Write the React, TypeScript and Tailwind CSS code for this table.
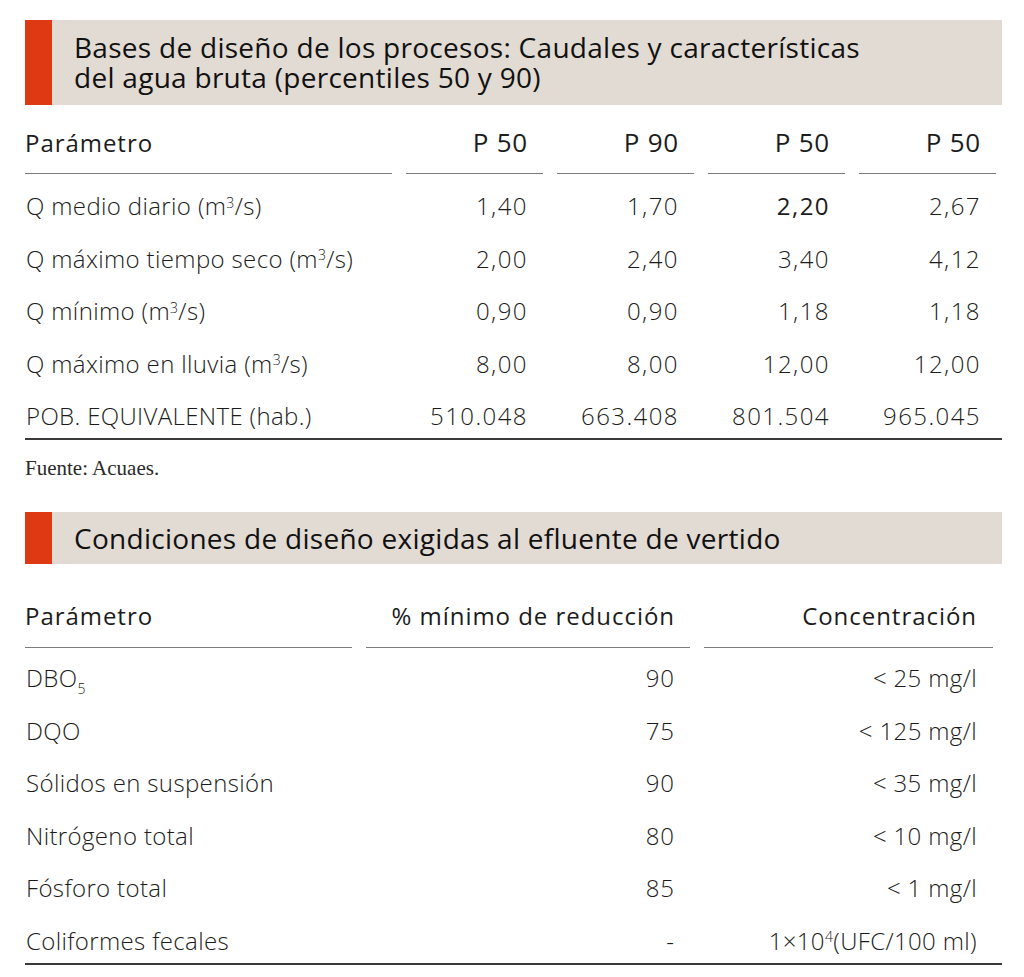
import React from "react";

const sans = "font-['Open_Sans',sans-serif]";

const Sup = ({ children }: { children: React.ReactNode }) => (
  <sup className="text-[14px] top-[-0.55em]">{children}</sup>
);

const caudales = [
  { label: <>Q medio diario (m<Sup>3</Sup>/s)</>, v: ["1,40", "1,70", "2,20", "2,67"] },
  { label: <>Q máximo tiempo seco (m<Sup>3</Sup>/s)</>, v: ["2,00", "2,40", "3,40", "4,12"] },
  { label: <>Q mínimo (m<Sup>3</Sup>/s)</>, v: ["0,90", "0,90", "1,18", "1,18"] },
  { label: <>Q máximo en lluvia (m<Sup>3</Sup>/s)</>, v: ["8,00", "8,00", "12,00", "12,00"] },
  { label: <>POB. EQUIVALENTE (hab.)</>, v: ["510.048", "663.408", "801.504", "965.045"] },
];

const vertido = [
  { label: <>DBO<sub className="text-[14px] bottom-[-0.45em]">5</sub></>, red: "90", conc: <>&lt; 25 mg/l</> },
  { label: <>DQO</>, red: "75", conc: <>&lt; 125 mg/l</> },
  { label: <>Sólidos en suspensión</>, red: "90", conc: <>&lt; 35 mg/l</> },
  { label: <>Nitrógeno total</>, red: "80", conc: <>&lt; 10 mg/l</> },
  { label: <>Fósforo total</>, red: "85", conc: <>&lt; 1 mg/l</> },
  { label: <>Coliformes fecales</>, red: "-", conc: <>1×10<Sup>4</Sup>(UFC/100 ml)</> },
];

function SectionHeader({ children, tall }: { children: React.ReactNode; tall?: boolean }) {
  return (
    <div className={`flex ${tall ? "h-[85px]" : "h-[52px]"} bg-[#e1dbd3]`}>
      <div className="w-[27px] bg-[#dd3a13]" />
      <h2 className="pl-[22px] self-center text-[28px] leading-[30px] tracking-[0.01em] font-medium text-[#111] pb-[1px]">
        {children}
      </h2>
    </div>
  );
}

export default function App() {
  return (
    <div className={`${sans} bg-white w-[1024px] h-[977px] pl-[25px] pr-[22px] pt-[20px] text-[#1c1c1c]`}>
      <SectionHeader tall>
        Bases de diseño de los procesos: Caudales y características
        <br />
        del agua bruta (percentiles 50 y 90)
      </SectionHeader>

      <div className="grid grid-cols-[367px_137px_137px_137px_137px] gap-x-[14px] text-[24px] tracking-[0.04em]">
        <div className="h-[69px] pt-[7px] flex items-center border-b border-[#7c7c7c] font-medium">Parámetro</div>
        {["P 50", "P 90", "P 50", "P 50"].map((h, i) => (
          <div key={i} className="h-[69px] pt-[7px] flex items-center justify-end pr-[15px] border-b border-[#7c7c7c] font-medium text-[26px] tracking-[0.03em]">
            {h}
          </div>
        ))}
      </div>

      <div className="mt-[6px] border-b-2 border-[#3a3a3a] font-light text-[24px] tracking-[0.015em]">
        {caudales.map((r, i) => (
          <div
            key={i}
            className={`grid grid-cols-[367px_137px_137px_137px_137px] gap-x-[14px] items-center ${i === caudales.length - 1 ? "h-[48px] pt-[4px]" : "h-[52.5px]"}`}
          >
            <div className="pl-[1px]">{r.label}</div>
            {r.v.map((v, j) => (
              <div key={j} className={`text-right pr-[15px] tracking-[0.06em] ${i === 0 && j === 2 ? "font-normal" : ""}`}>
                {v}
              </div>
            ))}
          </div>
        ))}
      </div>

      <p className="font-['Liberation_Serif',serif] text-[21px] text-[#2a2a2a] mt-[13px] h-[59px]">Fuente: Acuaes.</p>

      <SectionHeader>Condiciones de diseño exigidas al efluente de vertido</SectionHeader>

      <div className="grid grid-cols-[327px_324px_289px] gap-x-[14px] text-[24px] tracking-[0.04em] font-medium">
        <div className="h-[84px] pt-[20px] flex items-center border-b border-[#7c7c7c]">Parámetro</div>
        <div className="h-[84px] pt-[20px] flex items-center justify-end pr-[15px] border-b border-[#7c7c7c]">% mínimo de reducción</div>
        <div className="h-[84px] pt-[20px] flex items-center justify-end pr-[16px] border-b border-[#7c7c7c]">Concentración</div>
      </div>

      <div className="mt-[4px] border-b-2 border-[#3a3a3a] font-light text-[24px] tracking-[0.015em]">
        {vertido.map((r, i) => (
          <div
            key={i}
            className={`grid grid-cols-[327px_324px_289px] gap-x-[14px] items-center ${i === vertido.length - 1 ? "h-[48px] pt-[5px]" : "h-[52.5px]"}`}
          >
            <div className="pl-[1px]">{r.label}</div>
            <div className="text-right pr-[15px] tracking-[0.04em]">{r.red}</div>
            <div className="text-right pr-[16px]">{r.conc}</div>
          </div>
        ))}
      </div>
    </div>
  );
}
